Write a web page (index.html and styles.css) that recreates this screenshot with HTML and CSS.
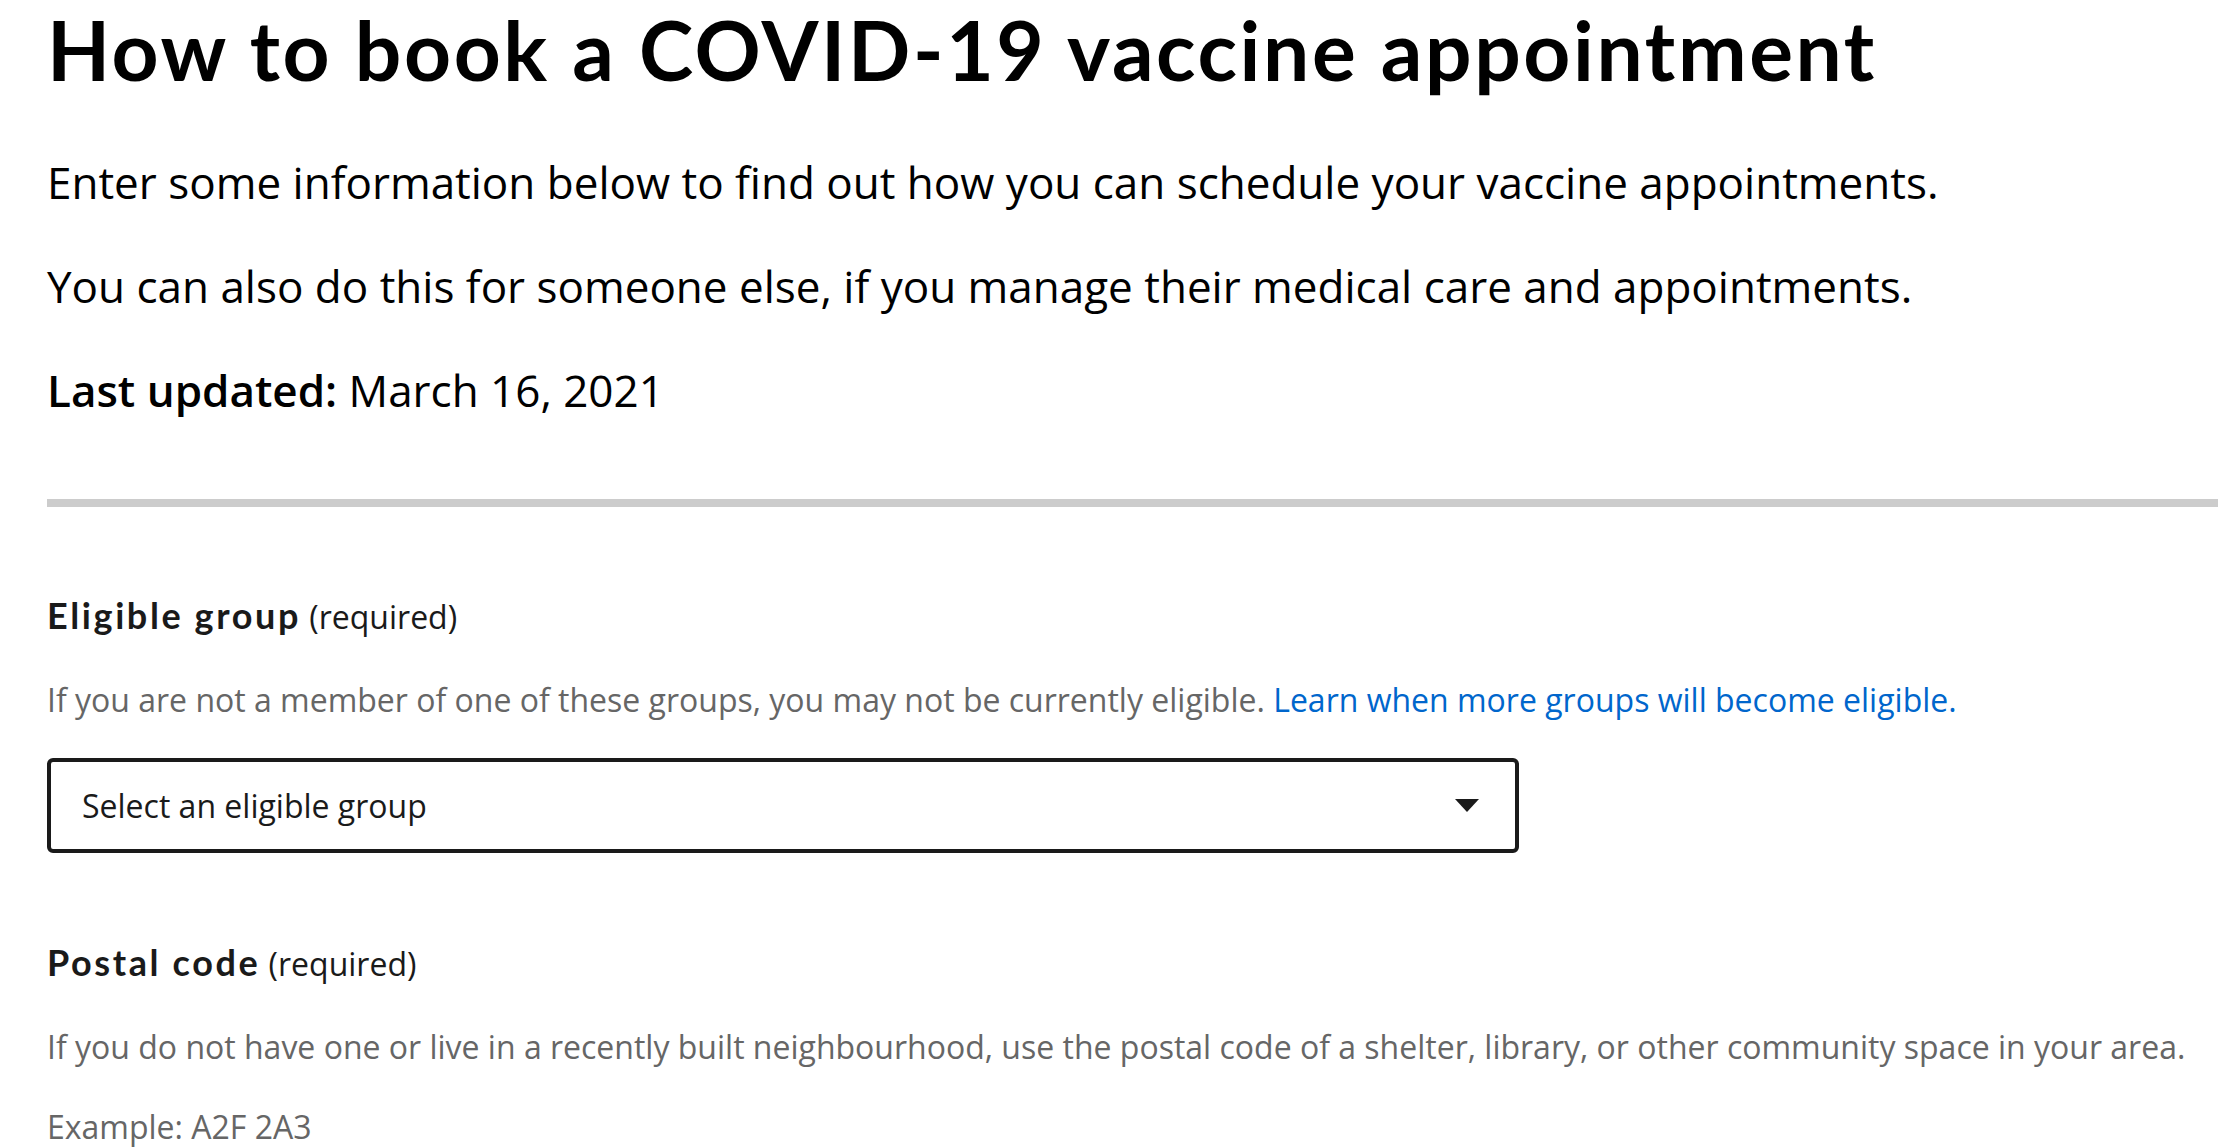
FILE: index.html
```html
<!DOCTYPE html>
<html lang="en">
<head>
<meta charset="utf-8">
<title>How to book a COVID-19 vaccine appointment</title>
<link rel="stylesheet" href="styles.css">
</head>
<body>
<main class="page">
  <h1 class="title">How to book a COVID-19 vaccine appointment</h1>
  <p class="lead">Enter some information below to find out how you can schedule your vaccine appointments.</p>
  <p class="lead">You can also do this for someone else, if you manage their medical care and appointments.</p>
  <p class="lead lead-last"><strong>Last updated:</strong> March 16, 2021</p>
  <hr class="rule">
  <form class="form">
    <div class="field">
      <div class="label"><span class="label-name">Eligible group</span> (required)</div>
      <p class="hint">If you are not a member of one of these groups, you may not be currently eligible. <a class="link" href="#">Learn when more groups will become eligible.</a></p>
      <div class="select">
        <span class="select-text">Select an eligible group</span>
        <svg class="select-arrow" width="24" height="13" viewBox="0 0 24 13"><path d="M0 0H24L12 13Z" fill="#1a1a1a"/></svg>
      </div>
    </div>
    <div class="field field-postal">
      <div class="label"><span class="label-name">Postal code</span> (required)</div>
      <p class="hint">If you do not have one or live in a recently built neighbourhood, use the postal code of a shelter, library, or other community space in your area.</p>
      <p class="hint hint-example">Example: A2F 2A3</p>
    </div>
  </form>
</main>
</body>
</html>
```

FILE: styles.css
```css
html, body {
  margin: 0;
  padding: 0;
  background: #ffffff;
}
body {
  font-family: "Open Sans", "Liberation Sans", sans-serif;
  color: #000000;
  overflow: hidden;
}
.page {
  padding-left: 47px;
  white-space: nowrap;
}
.title {
  font-family: Lato, "Open Sans", sans-serif;
  font-weight: 700;
  font-size: 82px;
  line-height: 98px;
  letter-spacing: 2.6px;
  margin: 0 0 50px 0;
  color: #000;
}
.lead {
  font-size: 44px;
  line-height: 68px;
  margin: 0 0 36px 0;
}
.lead strong {
  font-weight: 600;
}
.lead-last {
  margin-bottom: 75px;
}
.rule {
  border: 0;
  height: 8px;
  background: #cccccc;
  margin: 0;
}
.form {
  padding-top: 84px;
}
.field-postal {
  margin-top: 85px;
}
.label {
  font-size: 32px;
  line-height: 48px;
  color: #1a1a1a;
}
.label-name {
  font-family: Lato, "Open Sans", sans-serif;
  font-weight: 700;
  font-size: 36px;
  letter-spacing: 2.6px;
}
.hint {
  font-size: 32px;
  line-height: 48px;
  color: #666666;
  margin: 35px 0 0 0;
}
.hint-example {
  margin-top: 32px;
}
.link {
  color: #0066cc;
  text-decoration: none;
}
.select {
  box-sizing: border-box;
  width: 1472px;
  height: 95px;
  margin-top: 34px;
  border: 4px solid #1a1a1a;
  border-radius: 6px;
  display: flex;
  align-items: center;
  justify-content: space-between;
  padding: 0 36px 0 31px;
  font-size: 32px;
  line-height: 48px;
  color: #1a1a1a;
}
.select-arrow {
  display: block;
}
```
